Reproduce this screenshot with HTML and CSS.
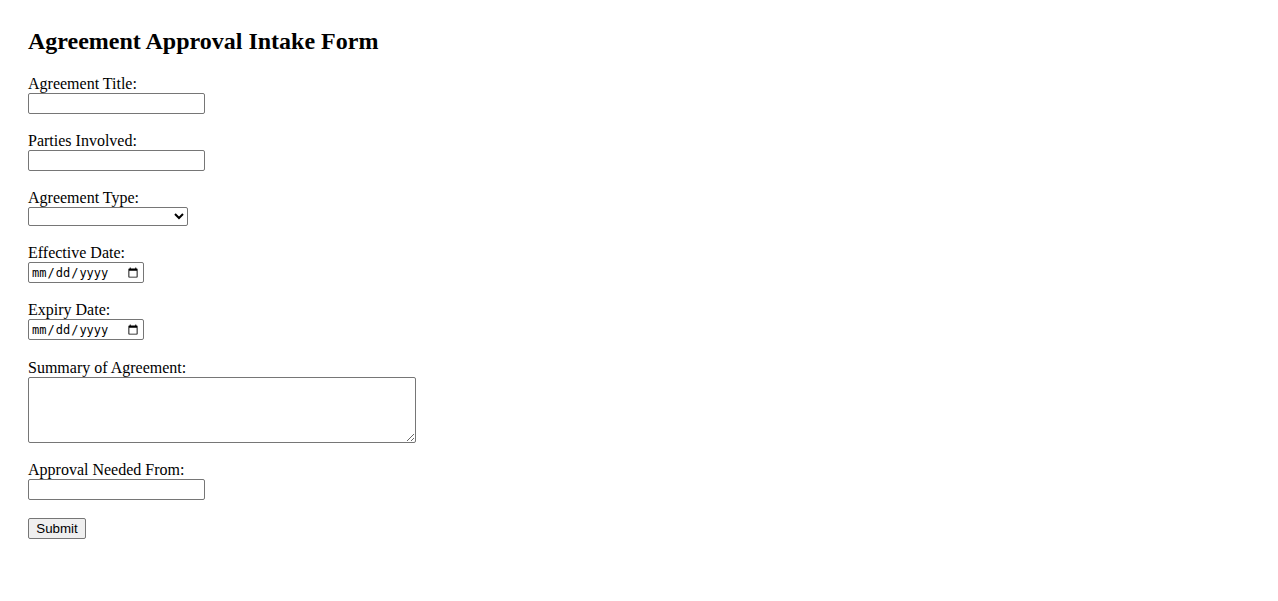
FILE: index.html
```html
<!DOCTYPE html>
<html lang="en">
<head>
<meta charset="utf-8">
<title>Agreement Approval Intake Form</title>
<link rel="stylesheet" href="styles.css">
</head>
<body>
<div class="page">
  <h2 class="title">Agreement Approval Intake Form</h2>
  <form class="form">
    <div class="field">
      <label for="title">Agreement Title:</label>
      <input class="text" type="text" id="title">
    </div>
    <div class="field">
      <label for="parties">Parties Involved:</label>
      <input class="text" type="text" id="parties">
    </div>
    <div class="field">
      <label for="type">Agreement Type:</label>
      <select class="select" id="type"><option value=""></option></select>
    </div>
    <div class="field">
      <label for="eff">Effective Date:</label>
      <input class="date" type="date" id="eff">
    </div>
    <div class="field field-wide-gap">
      <label for="exp">Expiry Date:</label>
      <input class="date" type="date" id="exp">
    </div>
    <div class="field">
      <label for="sum">Summary of Agreement:</label>
      <textarea class="area" id="sum"></textarea>
    </div>
    <div class="field">
      <label for="appr">Approval Needed From:</label>
      <input class="text" type="text" id="appr">
    </div>
    <button class="submit" type="submit">Submit</button>
  </form>
</div>
</body>
</html>
```
FILE: styles.css
```css
html, body {
  margin: 0;
  background: #fff;
}
body {
  font-family: "Liberation Serif", "Times New Roman", serif;
  font-size: 16px;
  color: #000;
}
.page {
  padding: 28px;
}
.title {
  margin: 0 0 21px;
  font-size: 24px;
  font-weight: bold;
  line-height: 26px;
}
.form {
  display: flex;
  flex-direction: column;
  align-items: flex-start;
}
.field {
  display: flex;
  flex-direction: column;
  align-items: flex-start;
  margin-bottom: 18px;
}
.field-wide-gap {
  margin-bottom: 19px;
}
.field label {
  display: block;
  line-height: 18px;
}
.text, .select, .date, .area, .submit {
  box-sizing: border-box;
  margin: 0;
  font-family: "Liberation Sans", Arial, sans-serif;
  font-size: 13.33px;
  color: #000;
  background: #fff;
  border: 1px solid #767676;
  border-radius: 2px;
}
.text {
  width: 177px;
  height: 21px;
  padding: 1px 2px;
}
.select {
  width: 160px;
  height: 19px;
  padding: 0;
}
.date {
  width: 116px;
  height: 21px;
  padding: 1px 2px;
  font-family: "DejaVu Sans Mono", "Liberation Mono", monospace;
  font-size: 12px;
}
.area {
  width: 388px;
  height: 66px;
  padding: 2px;
  resize: both;
}
.submit {
  height: 21px;
  width: 58px;
  padding: 1px 6px;
  background: #efefef;
  border-radius: 2px;
  font-size: 13.33px;
}
```
